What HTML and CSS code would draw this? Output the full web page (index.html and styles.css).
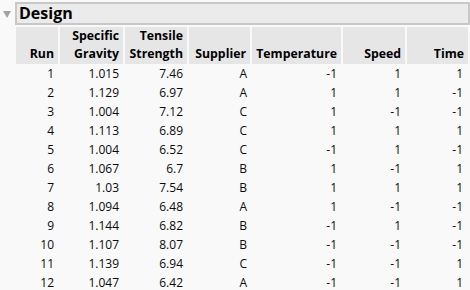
FILE: index.html
```html
<!DOCTYPE html>
<html>
<head>
<meta charset="utf-8">
<link rel="stylesheet" href="styles.css">
</head>
<body>
<div class="report">
  <div class="title-row">
    <span class="tri"></span>
    <div class="title">Design</div>
  </div>
  <table class="grid">
    <colgroup>
      <col class="c-run"><col class="c-sg"><col class="c-ts"><col class="c-sup"><col class="c-temp"><col class="c-speed"><col class="c-time">
    </colgroup>
    <thead>
      <tr>
        <th>Run</th>
        <th>Specific<br>Gravity</th>
        <th>Tensile<br>Strength</th>
        <th>Supplier</th>
        <th>Temperature</th>
        <th>Speed</th>
        <th>Time</th>
      </tr>
    </thead>
    <tbody>
      <tr><td>1</td><td>1.015</td><td>7.46</td><td>A</td><td>-1</td><td>1</td><td>1</td></tr>
      <tr><td>2</td><td>1.129</td><td>6.97</td><td>A</td><td>1</td><td>1</td><td>-1</td></tr>
      <tr><td>3</td><td>1.004</td><td>7.12</td><td>C</td><td>1</td><td>-1</td><td>-1</td></tr>
      <tr><td>4</td><td>1.113</td><td>6.89</td><td>C</td><td>1</td><td>1</td><td>1</td></tr>
      <tr><td>5</td><td>1.004</td><td>6.52</td><td>C</td><td>-1</td><td>1</td><td>-1</td></tr>
      <tr><td>6</td><td>1.067</td><td>6.7</td><td>B</td><td>1</td><td>-1</td><td>1</td></tr>
      <tr><td>7</td><td>1.03</td><td>7.54</td><td>B</td><td>1</td><td>1</td><td>1</td></tr>
      <tr><td>8</td><td>1.094</td><td>6.48</td><td>A</td><td>1</td><td>-1</td><td>-1</td></tr>
      <tr><td>9</td><td>1.144</td><td>6.82</td><td>B</td><td>-1</td><td>1</td><td>-1</td></tr>
      <tr><td>10</td><td>1.107</td><td>8.07</td><td>B</td><td>-1</td><td>-1</td><td>-1</td></tr>
      <tr><td>11</td><td>1.139</td><td>6.94</td><td>C</td><td>-1</td><td>-1</td><td>1</td></tr>
      <tr><td>12</td><td>1.047</td><td>6.42</td><td>A</td><td>-1</td><td>-1</td><td>1</td></tr>
    </tbody>
  </table>
</div>
</body>
</html>
```
FILE: styles.css
```css
html, body {
  margin: 0;
  padding: 0;
  background: #f9f9f9;
}
body {
  font-family: "Open Sans", "Noto Sans", sans-serif;
  color: #0a0a0a;
  overflow: hidden;
}
.report {
  padding-top: 2px;
}
.title-row {
  display: flex;
  align-items: flex-start;
}
.tri {
  width: 0;
  height: 0;
  margin: 9px 4px 0 3px;
  border-left: 4px solid transparent;
  border-right: 4px solid transparent;
  border-top: 7px solid #a3a3a3;
}
.title {
  width: 449px;
  height: 19px;
  border: 2px solid #c8c8c8;
  background: #ebebeb;
  font-weight: 700;
  font-size: 16px;
  line-height: 19px;
  padding-left: 2px;
  box-sizing: content-box;
  color: #000;
}
.grid {
  margin: 2px 0 0 16px;
  border-collapse: collapse;
  table-layout: fixed;
  width: 452px;
}
.c-run { width: 43px; }
.c-sg { width: 65px; }
.c-ts { width: 64px; }
.c-sup { width: 63px; }
.c-temp { width: 91px; }
.c-speed { width: 64px; }
.c-time { width: 62px; }
.grid th {
  background: #e6e6e6;
  font-weight: 700;
  font-size: 12.3px;
  line-height: 18px;
  height: 36px;
  padding: 0 4px 1px 0;
  text-align: right;
  vertical-align: bottom;
  border-left: 2px solid #f9f9f9;
  color: #000;
  white-space: nowrap;
}
.grid th:first-child {
  border-left: none;
}
.grid td {
  font-size: 12px;
  height: 19px;
  line-height: 19px;
  padding: 0 5px 0 0;
  text-align: right;
  white-space: nowrap;
}
.grid td:nth-child(4) {
  padding-right: 4px;
}
```
